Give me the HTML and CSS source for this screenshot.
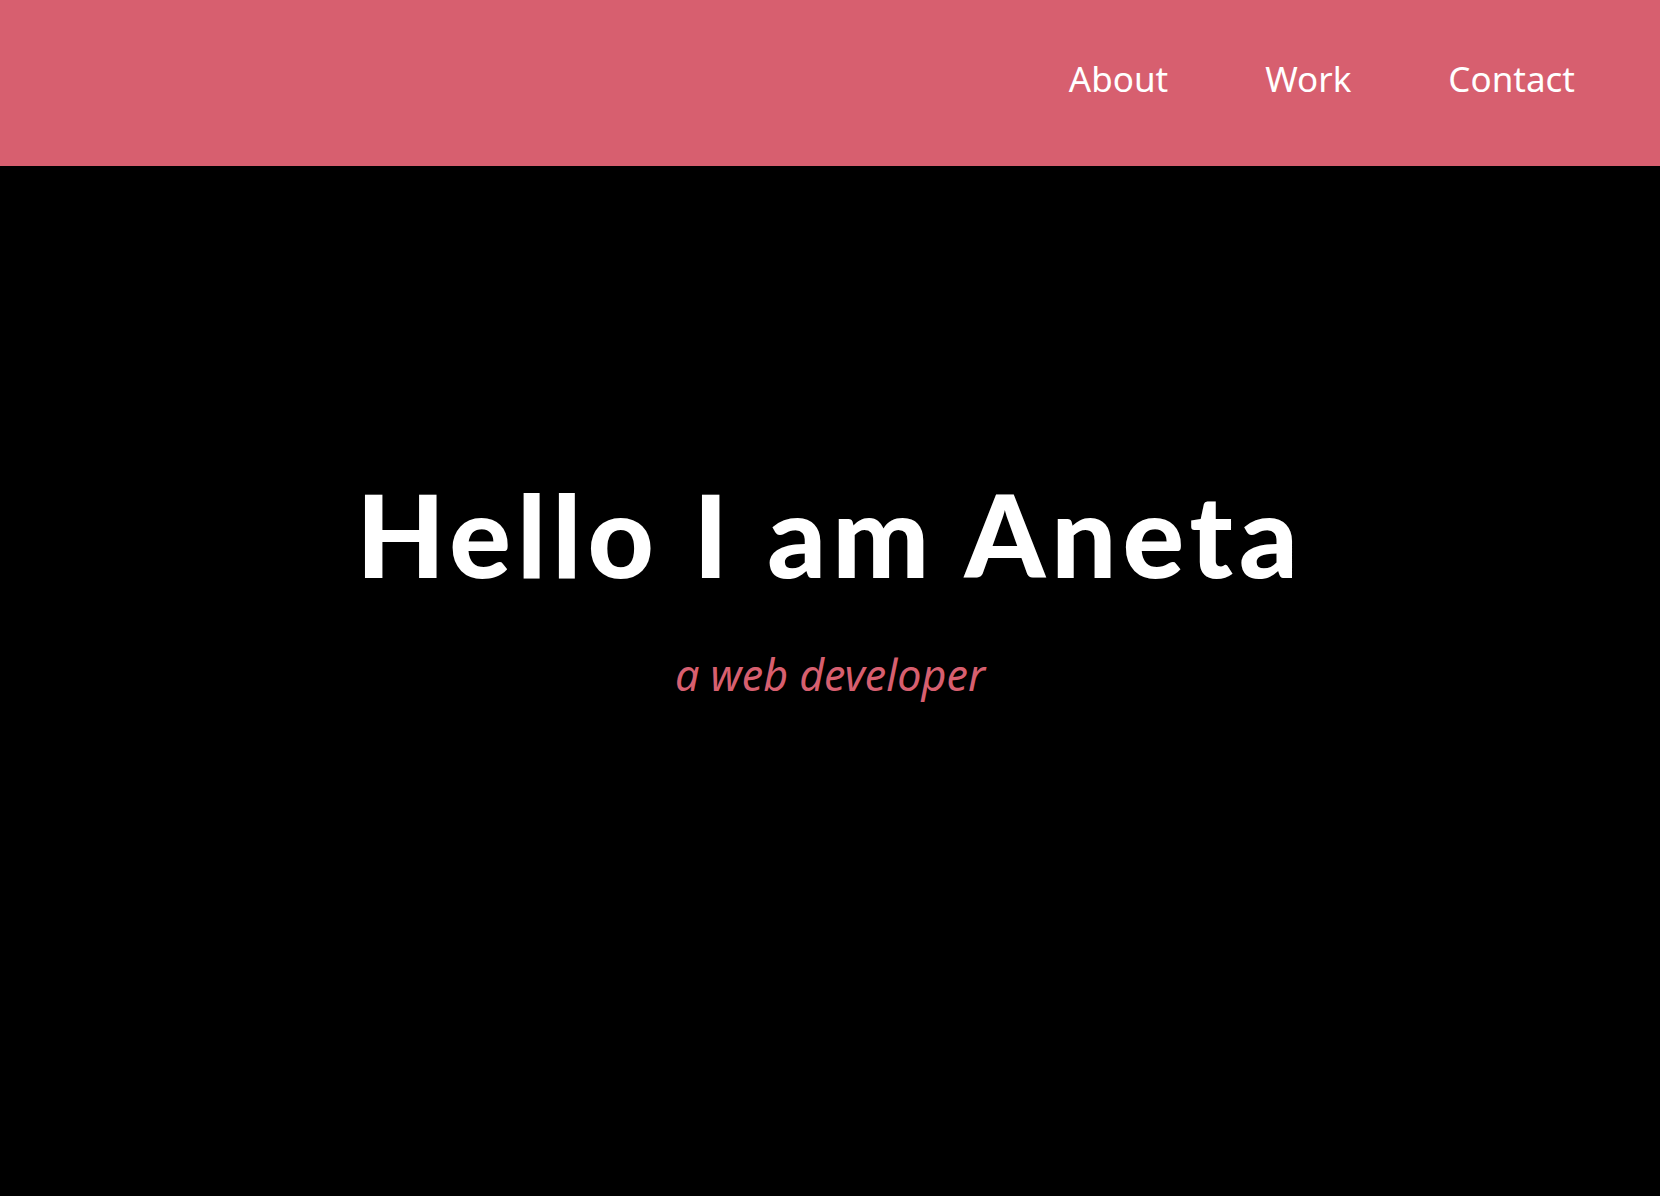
FILE: index.html
```html
<!DOCTYPE html>
<html lang="en">
<head>
<meta charset="utf-8">
<title>Aneta</title>
<link rel="stylesheet" href="styles.css">
</head>
<body>
<header class="topbar">
  <nav class="nav">
    <a class="nav-link" href="#about">About</a>
    <a class="nav-link" href="#work">Work</a>
    <a class="nav-link" href="#contact">Contact</a>
  </nav>
</header>
<main class="hero">
  <h1 class="hero-title">Hello I am Aneta</h1>
  <p class="hero-sub">a web developer</p>
</main>
</body>
</html>
```
FILE: styles.css
```css
html, body {
  margin: 0;
  padding: 0;
  background: #000;
}
body {
  min-height: 1196px;
  font-family: "Noto Sans", "Open Sans", sans-serif;
}
.topbar {
  box-sizing: border-box;
  height: 166px;
  background: #d75f6f;
  display: flex;
  justify-content: flex-end;
  align-items: center;
  padding-right: 85px;
  padding-bottom: 10px;
}
.nav {
  display: flex;
  gap: 97px;
}
.nav-link {
  color: #fff;
  text-decoration: none;
  font-size: 35px;
  line-height: 1;
}
.hero {
  display: flex;
  flex-direction: column;
  align-items: center;
  padding-top: 310px;
}
.hero-title {
  margin: 0;
  color: #fff;
  font-family: "Lato", sans-serif;
  font-weight: 900;
  font-size: 115px;
  letter-spacing: 6px;
  line-height: 1;
}
.hero-sub {
  margin: 62px 0 0;
  color: #d75f6f;
  font-style: italic;
  font-size: 43px;
  line-height: 1;
}
```
